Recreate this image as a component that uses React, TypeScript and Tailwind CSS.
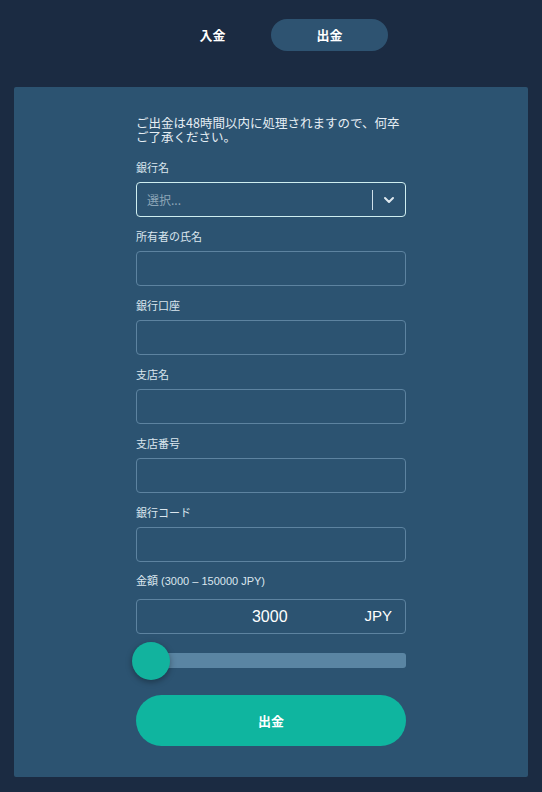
import { ChevronDown } from "lucide-react"

const fields = ["所有者の氏名", "銀行口座", "支店名", "支店番号", "銀行コード"]

function Field({ label }: { label: string }) {
  return (
    <div className="flex flex-col">
      <label className="text-[11px] leading-[15px] text-[#dbe6ee]">{label}</label>
      <input className="mt-[7px] h-[35px] w-full rounded-[4px] border border-[#5d83a0] bg-transparent px-3 text-sm text-white outline-none" />
    </div>
  )
}

export default function App() {
  return (
    <div
      className="min-h-[792px] w-full bg-[#1b2b42] pt-[19px] pb-[15px]"
      style={{ fontFamily: '"Noto Sans CJK JP", "Liberation Sans", sans-serif' }}
    >
      <div className="flex justify-center">
        <button className="h-[32px] w-[117px] rounded-full text-[13px] font-bold text-white">入金</button>
        <button className="h-[32px] w-[117px] rounded-full bg-[#2e5371] text-[13px] font-bold text-white">出金</button>
      </div>

      <div className="mx-[14px] mt-[36px] h-[690px] rounded-[2px] bg-[#2c5371]">
        <div className="mx-auto flex w-[270px] flex-col pt-[29px]">
          <p className="text-[12.5px] leading-[14px] text-[#e6eef4]">
            ご出金は48時間以内に処理されますので、何卒ご了承ください。
          </p>

          <div className="mt-[16px] flex flex-col">
            <label className="text-[11px] leading-[15px] text-[#dbe6ee]">銀行名</label>
            <div className="mt-[7px] flex h-[35px] items-center rounded-[4px] border border-[#cfeef0] pl-[10px]">
              <span className="flex-1 text-[12px] text-[#8da6b8]">選択...</span>
              <span className="h-[20px] w-px bg-[#cfe0ea]" />
              <ChevronDown className="mx-[8px] h-[16px] w-[16px] text-[#dfe9ef]" strokeWidth={3} />
            </div>
          </div>

          <div className="mt-[12px] flex flex-col gap-[12px]">
            {fields.map((f) => (
              <Field key={f} label={f} />
            ))}
          </div>

          <div className="mt-[12px] flex flex-col">
            <label
              className="text-[11px] leading-[15px] text-[#dbe6ee]"
              style={{ fontFamily: '"Liberation Sans", "Noto Sans CJK JP", sans-serif' }}
            >
              金額 (3000 – 150000 JPY)
            </label>
            <div
              className="mt-[10px] flex h-[35px] items-center rounded-[4px] border border-[#5d83a0] pr-[13px]"
              style={{ fontFamily: '"Liberation Sans", sans-serif' }}
            >
              <span className="flex-1 pl-[50px] text-center text-[16px] text-white">3000</span>
              <span className="ml-[12px] text-[15px] text-white">JPY</span>
            </div>
          </div>

          <div className="relative mt-[19px] h-[15px]">
            <div className="ml-[14px] h-[15px] rounded-[3px] bg-[#5a85a3]" />
            <div className="absolute left-[-4px] top-[-11px] h-[38px] w-[38px] rounded-full bg-[#12b39e] shadow-[0_2px_6px_rgba(0,0,0,0.35)]" />
          </div>

          <button className="mt-[27px] h-[51px] w-full rounded-full bg-[#0fb59f] text-[13px] font-bold text-white">
            出金
          </button>
        </div>
      </div>
    </div>
  )
}
